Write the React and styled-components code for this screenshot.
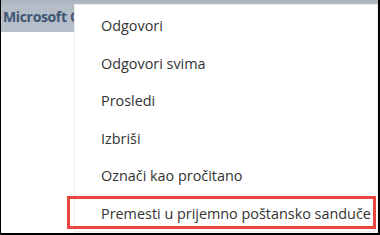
import styled, { createGlobalStyle } from "styled-components"

const Global = createGlobalStyle`
    html, body {
        margin: 0;
        padding: 0;
        background: #ffffff;
    }
`

const Frame = styled.div`
    position: relative;
    box-sizing: border-box;
    width: 380px;
    height: 235px;
    border-left: 1px solid #000;
    border-right: 2px solid #000;
    border-bottom: 2px solid #000;
    overflow: hidden;
    background: #fff;
    font-family: "Open Sans", "Noto Sans", sans-serif;
`

const TopBar = styled.div`
    height: 32px;
    background: linear-gradient(#a9b2bd 0px, #b4bcc7 5px, #b6bec9 100%);
    display: flex;
    align-items: center;
`

const BrandClip = styled.div`
    width: 73px;
    overflow: hidden;
    padding-left: 2px;
`

const Brand = styled.span`
    font-family: "Open Sans", "Noto Sans", sans-serif;
    font-weight: 700;
    font-size: 14px;
    letter-spacing: -0.35px;
    color: #3d5572;
    white-space: nowrap;
`

const Menu = styled.ul`
    position: absolute;
    left: 74px;
    top: 5px;
    width: 302px;
    height: 226px;
    margin: 0;
    padding: 2px 0 0;
    list-style: none;
    background: #fff;
    box-shadow: 0 0 0 1px #ececec, 0 1px 2px rgba(0, 0, 0, 0.08);
    box-sizing: border-box;
`

const Item = styled.li`
    position: relative;
    height: 37.5px;
    display: flex;
    align-items: center;
    padding-left: 26px;
    font-size: 14.4px;
    color: #333;
    white-space: nowrap;
`

const Highlight = styled.span`
    position: absolute;
    left: -8px;
    right: 1px;
    top: 1.5px;
    height: 33px;
    border: 3px solid #e8473d;
    box-sizing: border-box;
`

const items = [
    "Odgovori",
    "Odgovori svima",
    "Prosledi",
    "Izbriši",
    "Označi kao pročitano",
]

export default function App() {
    return (
        <>
            <Global />
            <Frame>
                <TopBar>
                    <BrandClip>
                        <Brand>Microsoft Outlook</Brand>
                    </BrandClip>
                </TopBar>
                <Menu>
                    {items.map((t) => (
                        <Item key={t}>{t}</Item>
                    ))}
                    <Item>
                        Premesti u prijemno poštansko sanduče
                        <Highlight />
                    </Item>
                </Menu>
            </Frame>
        </>
    )
}
